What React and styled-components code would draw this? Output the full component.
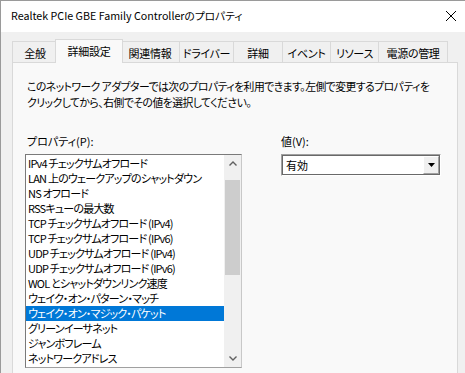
import React from "react";
import styled, { createGlobalStyle } from "styled-components";

const GlobalStyle = createGlobalStyle`
  html, body {
    margin: 0;
    padding: 0;
    background: #f0f0f0;
  }
  body {
    font-family: "Noto Sans CJK JP", "Noto Sans", sans-serif;
    font-size: 11px;
    color: #000;
    font-feature-settings: "palt";
  }
`;

const Window = styled.div`
  width: 465px;
  height: 373px;
  box-sizing: border-box;
  overflow: hidden;
  background: #f0f0f0;
  border-top: 1px solid #9a9a9a;
  border-left: 1px solid #9a9a9a;
`;

const TitleBar = styled.div`
  height: 31px;
  display: flex;
  align-items: center;
  justify-content: space-between;
  padding: 0 9px 0 10px;
  background: #fff;
`;

const Title = styled.span`
  font-size: 10.7px;
  line-height: 16px;
  margin-top: -1px;
  white-space: nowrap;
`;

const CloseButton = styled.span`
  display: flex;
  width: 10px;
  height: 10px;
  margin-top: -1px;
`;

const TabStrip = styled.div`
  display: flex;
  align-items: flex-end;
  height: 24px;
  margin: 7px 0 -1px 11px;
`;

const Tab = styled.div`
  position: relative;
  box-sizing: border-box;
  flex: none;
  display: flex;
  align-items: center;
  justify-content: center;
  width: ${(p) => p.$w + 1}px;
  height: 22px;
  margin-right: -1px;
  border: 1px solid #d9d9d9;
  border-bottom: none;
  background: #f0f0f0;
  line-height: 16px;
  letter-spacing: -0.3px;
  white-space: nowrap;
  padding-top: 1px;

  &[data-active="true"] {
    z-index: 2;
    width: ${(p) => p.$w + 5}px;
    height: 24px;
    margin: 0 -3px 0 -2px;
    background: #f9f9f9;
    padding-top: 0;
    padding-bottom: 2px;
  }
`;

const Panel = styled.div`
  position: relative;
  z-index: 1;
  box-sizing: border-box;
  width: 446px;
  height: 330px;
  margin-left: 11px;
  padding: 15px 0 0 12px;
  border: 1px solid #d9d9d9;
  background: #f9f9f9;
`;

const Description = styled.p`
  margin: 0 0 23px;
  padding-left: 2px;
  font-size: 10.8px;
  line-height: 16px;
  letter-spacing: -0.5px;
  white-space: nowrap;
`;

const Columns = styled.div`
  display: grid;
  grid-template-columns: 217px 161px;
  column-gap: 37px;
  align-items: start;
`;

const Column = styled.div`
  display: flex;
  flex-direction: column;
`;

const FieldLabel = styled.div`
  padding-left: 2px;
  line-height: 16px;
  margin-bottom: 5px;
`;

const ListBox = styled.div`
  box-sizing: border-box;
  display: flex;
  height: 214px;
  border: 1px solid;
  border-color: #7a7a7a #c8c8c8 #a0a0a0 #7a7a7a;
  background: #fff;
  overflow: hidden;
`;

const Items = styled.div`
  flex: 1;
  min-width: 0;
  padding-top: 1px;
`;

const Item = styled.div`
  height: 15px;
  line-height: 15px;
  padding-left: 2px;
  letter-spacing: -0.8px;
  white-space: nowrap;
  overflow: hidden;
  background: ${(p) => (p.$selected ? "#0078d7" : "transparent")};
  color: ${(p) => (p.$selected ? "#fff" : "#000")};
`;

const ScrollBar = styled.div`
  flex: none;
  width: 17px;
  display: flex;
  flex-direction: column;
  background: #f0f0f0;
`;

const ScrollArrow = styled.div`
  height: 17px;
  display: flex;
  align-items: center;
  justify-content: center;
`;

const Track = styled.div`
  flex: 1;
  display: flex;
  flex-direction: column;
  align-items: center;
`;

const Thumb = styled.div`
  width: 15px;
  background: #cdcdcd;
`;

const Combo = styled.div`
  box-sizing: border-box;
  display: flex;
  width: 160px;
  height: 22px;
  margin-left: 2px;
  border: 1px solid;
  border-color: #a0a0a0 #fff #fff #a0a0a0;
`;

const ComboInner = styled.div`
  flex: 1;
  display: flex;
  border: 1px solid #696969;
  background: #fff;
`;

const ComboText = styled.span`
  flex: 1;
  padding-left: 3px;
  line-height: 18px;
`;

const ComboButton = styled.span`
  box-sizing: border-box;
  width: 16px;
  display: flex;
  align-items: center;
  justify-content: center;
  background: #f0f0f0;
  border: 1px solid;
  border-color: #fff #a0a0a0 #a0a0a0 #fff;
`;

const tabs = [
  { label: "全般", w: 45 },
  { label: "詳細設定", w: 63, active: true },
  { label: "関連情報", w: 59 },
  { label: "ドライバー", w: 54 },
  { label: "詳細", w: 49 },
  { label: "イベント", w: 48 },
  { label: "リソース", w: 48 },
  { label: "電源の管理", w: 69 },
];

const properties = [
  "IPv4 チェックサムオフロード",
  "LAN 上のウェークアップのシャットダウン",
  "NS オフロード",
  "RSSキューの最大数",
  "TCP チェックサムオフロード (IPv4)",
  "TCP チェックサムオフロード (IPv6)",
  "UDP チェックサムオフロード (IPv4)",
  "UDP チェックサムオフロード (IPv6)",
  "WOL とシャットダウンリンク速度",
  "ウェイク・オン・パターン・マッチ",
  "ウェイク・オン・マジック・パケット",
  "グリーンイーサネット",
  "ジャンボフレーム",
  "ネットワークアドレス",
];

const selected = 10;

function Chevron({ up }) {
  return (
    <svg width="8" height="5" viewBox="0 0 8 5">
      <path
        d={up ? "M0.5 4.5 L4 1 L7.5 4.5" : "M0.5 0.5 L4 4 L7.5 0.5"}
        fill="none"
        stroke="#606060"
        strokeWidth="1.4"
      />
    </svg>
  );
}

export default function App() {
  return (
    <>
      <GlobalStyle />
      <Window>
        <TitleBar>
          <Title>Realtek PCIe GBE Family Controllerのプロパティ</Title>
          <CloseButton>
            <svg width="10" height="10" viewBox="0 0 10 10">
              <path d="M0 0 L10 10 M10 0 L0 10" stroke="#000" strokeWidth="1" />
            </svg>
          </CloseButton>
        </TitleBar>

        <TabStrip>
          {tabs.map((t) => (
            <Tab key={t.label} $w={t.w} data-active={t.active ? "true" : "false"}>
              {t.label}
            </Tab>
          ))}
        </TabStrip>

        <Panel>
          <Description>
            このネットワーク アダプターでは次のプロパティを利用できます。左側で変更するプロパティを
            <br />
            クリックしてから、右側でその値を選択してください。
          </Description>

          <Columns>
            <Column>
              <FieldLabel>プロパティ(P):</FieldLabel>
              <ListBox>
                <Items>
                  {properties.map((p, i) => (
                    <Item key={p} $selected={i === selected}>
                      {p}
                    </Item>
                  ))}
                </Items>
                <ScrollBar>
                  <ScrollArrow>
                    <Chevron up />
                  </ScrollArrow>
                  <Track>
                    <Thumb style={{ marginTop: 8, height: 95 }} />
                  </Track>
                  <ScrollArrow>
                    <Chevron />
                  </ScrollArrow>
                </ScrollBar>
              </ListBox>
            </Column>

            <Column>
              <FieldLabel>値(V):</FieldLabel>
              <Combo>
                <ComboInner>
                  <ComboText>有効</ComboText>
                  <ComboButton>
                    <svg width="7" height="4" viewBox="0 0 7 4">
                      <path d="M0 0 L7 0 L3.5 4 Z" fill="#000" />
                    </svg>
                  </ComboButton>
                </ComboInner>
              </Combo>
            </Column>
          </Columns>
        </Panel>
      </Window>
    </>
  );
}
